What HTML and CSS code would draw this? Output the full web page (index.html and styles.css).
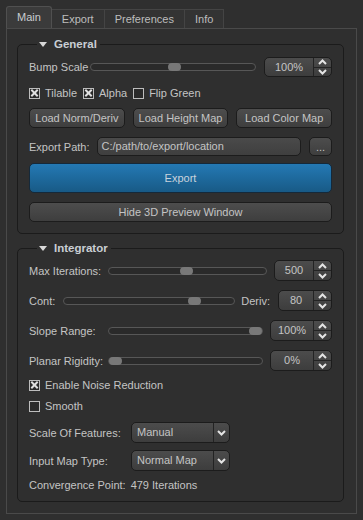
FILE: index.html
```html
<!DOCTYPE html>
<html lang="en">
<head>
    <meta charset="UTF-8">
    <title>Normal Map Tools</title>
    <link rel="stylesheet" href="styles.css">
</head>
<body>

    <!-- Tab bar -->
    <div class="tabs">
        <div class="tab active">Main</div>
        <div class="tab">Export</div>
        <div class="tab">Preferences</div>
        <div class="tab">Info</div>
    </div>

    <div class="pane">

        <!-- General -->
        <fieldset class="group general">
            <legend><span class="arrow"></span>General</legend>

            <div class="row r-bump">
                <span class="label">Bump Scale</span>
                <div class="slider"><span class="handle" style="left: 46.7%"></span></div>
                <div class="spin w68">
                    <span class="value">100%</span>
                    <span class="spin-btns">
                        <span class="up"><svg width="9" height="6" viewBox="0 0 9 6"><polyline points="1,5 4.5,1.5 8,5"/></svg></span>
                        <span class="down"><svg width="9" height="6" viewBox="0 0 9 6"><polyline points="1,1 4.5,4.5 8,1"/></svg></span>
                    </span>
                </div>
            </div>

            <div class="row r-checks">
                <label class="check on"><span class="box"></span>Tilable</label>
                <label class="check on"><span class="box"></span>Alpha</label>
                <label class="check"><span class="box"></span>Flip Green</label>
            </div>

            <div class="row r-buttons">
                <button class="btn">Load Norm/Deriv</button>
                <button class="btn">Load Height Map</button>
                <button class="btn">Load Color Map</button>
            </div>

            <div class="row r-path">
                <span class="label">Export Path:</span>
                <div class="field">C:/path/to/export/location</div>
                <button class="btn dots">...</button>
            </div>

            <button class="btn export">Export</button>
            <button class="btn hide">Hide 3D Preview Window</button>
        </fieldset>

        <!-- Integrator -->
        <fieldset class="group integrator">
            <legend><span class="arrow"></span>Integrator</legend>

            <div class="row r-slide">
                <span class="label wide">Max Iterations:</span>
                <div class="slider"><span class="handle" style="left: 45.5%"></span></div>
                <div class="spin w58">
                    <span class="value">500</span>
                    <span class="spin-btns">
                        <span class="up"><svg width="9" height="6" viewBox="0 0 9 6"><polyline points="1,5 4.5,1.5 8,5"/></svg></span>
                        <span class="down"><svg width="9" height="6" viewBox="0 0 9 6"><polyline points="1,1 4.5,4.5 8,1"/></svg></span>
                    </span>
                </div>
            </div>

            <div class="row r-slide">
                <span class="label">Cont:</span>
                <div class="slider cont"><span class="handle" style="left: 73%"></span></div>
                <span class="label deriv">Deriv:</span>
                <div class="spin w54">
                    <span class="value">80</span>
                    <span class="spin-btns">
                        <span class="up"><svg width="9" height="6" viewBox="0 0 9 6"><polyline points="1,5 4.5,1.5 8,5"/></svg></span>
                        <span class="down"><svg width="9" height="6" viewBox="0 0 9 6"><polyline points="1,1 4.5,4.5 8,1"/></svg></span>
                    </span>
                </div>
            </div>

            <div class="row r-slide">
                <span class="label wide">Slope Range:</span>
                <div class="slider"><span class="handle" style="left: 91.5%"></span></div>
                <div class="spin w62">
                    <span class="value">100%</span>
                    <span class="spin-btns">
                        <span class="up"><svg width="9" height="6" viewBox="0 0 9 6"><polyline points="1,5 4.5,1.5 8,5"/></svg></span>
                        <span class="down"><svg width="9" height="6" viewBox="0 0 9 6"><polyline points="1,1 4.5,4.5 8,1"/></svg></span>
                    </span>
                </div>
            </div>

            <div class="row r-slide">
                <span class="label wide">Planar Rigidity:</span>
                <div class="slider"><span class="handle" style="left: 0%"></span></div>
                <div class="spin w62">
                    <span class="value">0%</span>
                    <span class="spin-btns">
                        <span class="up"><svg width="9" height="6" viewBox="0 0 9 6"><polyline points="1,5 4.5,1.5 8,5"/></svg></span>
                        <span class="down"><svg width="9" height="6" viewBox="0 0 9 6"><polyline points="1,1 4.5,4.5 8,1"/></svg></span>
                    </span>
                </div>
            </div>

            <div class="row r-check">
                <label class="check on"><span class="box"></span>Enable Noise Reduction</label>
            </div>
            <div class="row r-check">
                <label class="check"><span class="box"></span>Smooth</label>
            </div>

            <div class="row r-combo first">
                <span class="label combo-label">Scale Of Features:</span>
                <div class="combo">
                    <span class="value">Manual</span>
                    <span class="combo-btn"><svg width="9" height="6" viewBox="0 0 9 6"><polyline points="1,1 4.5,4.5 8,1"/></svg></span>
                </div>
            </div>
            <div class="row r-combo">
                <span class="label combo-label">Input Map Type:</span>
                <div class="combo">
                    <span class="value">Normal Map</span>
                    <span class="combo-btn"><svg width="9" height="6" viewBox="0 0 9 6"><polyline points="1,1 4.5,4.5 8,1"/></svg></span>
                </div>
            </div>

            <div class="row r-info">
                <span class="label">Convergence Point:</span>
                <span class="label result">479 Iterations</span>
            </div>
        </fieldset>

    </div>

</body>
</html>
```

FILE: styles.css
```css
/* General */
body { margin: 0; background-color: #2f2f2f; color: #c4c4c4; font-family: "Liberation Sans", Arial, sans-serif; font-size: 11px; line-height: 14px; width: 363px; height: 520px; overflow: hidden; }
button { font-family: inherit; font-size: 11px; }

/* Tabs */
.tabs { display: flex; align-items: flex-end; height: 28px; padding-left: 6px; box-sizing: border-box; }
.tab { height: 19px; line-height: 18px; padding: 0 10px; border: 1px solid #444; border-bottom: none; border-left: none; background-color: #333; color: #bdbdbd; box-sizing: border-box; }
.tab.active { height: 22px; line-height: 21px; border: 1px solid #505050; border-bottom: none; border-radius: 3px 3px 0 0; background-color: #3b3b3b; color: #c8ccd0; }

/* Pane */
.pane { margin: 0 6px; height: 486px; border: 1px solid #4a4a4a; box-sizing: border-box; padding: 8px 12px 0 10px; }

/* Group boxes */
.group { margin: 0; border: 1px solid #1b1b1b; border-radius: 5px; padding: 6px 11px 11px 11px; min-width: 0; }
.group legend { padding: 0 3px 0 2px; margin-left: 8px; font-weight: bold; color: #c9ced4; line-height: 14px; font-size: 11.5px; }
.arrow { display: inline-block; width: 0; height: 0; border-left: 4px solid transparent; border-right: 4px solid transparent; border-top: 5px solid #d8d8d8; margin: 0 7px 1px 0; }
.integrator { margin-top: 7px; padding-top: 5px; padding-bottom: 9px; }

/* Rows */
.row { display: flex; align-items: center; }
.label { white-space: nowrap; }
.label.wide { width: 79px; flex: none; }
.r-bump { height: 20px; }
.r-checks { height: 14px; margin-top: 9px; gap: 5px; }
.r-buttons { height: 20px; margin-top: 8px; gap: 8px; }
.r-path { height: 19px; margin-top: 9px; }
.r-slide { height: 21px; margin-top: 9px; }
.r-slide:first-of-type { margin-top: 0; }
.r-check { height: 14px; margin-top: 7px; }
.r-combo { height: 21px; margin-top: 7px; }
.r-combo.first { margin-top: 9px; }
.r-info { height: 14px; margin-top: 7px; }
.result { margin-left: 5px; }

/* Slider */
.slider { position: relative; flex: 1; height: 8px; margin: 0 8px 0 2px; border: 1px solid #575757; border-radius: 4px; background-color: #2a2a2a; box-sizing: border-box; }
.r-slide .slider { margin: 0 7px 0 0; }
.slider.cont { margin: 0 6px 0 8px; }
.handle { position: absolute; top: -1px; width: 13px; height: 8px; border-radius: 4px; background-color: #787878; }
.deriv { margin-right: 8px; }

/* Spin box */
.spin { display: flex; height: 100%; border: 1px solid #1c1c1c; border-radius: 5px; background: linear-gradient(#4c4c4c, #3d3d3d); box-sizing: border-box; flex: none; }
.w68 { width: 68px; }
.w62 { width: 62px; }
.w58 { width: 58px; }
.w54 { width: 54px; }
.spin .value { flex: 1; text-align: center; line-height: 19px; color: #c4c4c4; }
.spin-btns { display: flex; flex-direction: column; width: 17px; border-left: 1px solid #232323; }
.spin-btns span { flex: 1; display: flex; align-items: center; justify-content: center; }
.spin-btns .up { border-bottom: 1px solid #232323; }
svg polyline { fill: none; stroke: #e4e4e4; stroke-width: 2; }

/* Checkbox */
.check { display: flex; align-items: center; gap: 5px; margin-right: 1px; }
.box { width: 11px; height: 11px; border: 1px solid #bdbdbd; box-sizing: border-box; position: relative; background-color: #2a2a2a; }
.check.on .box::before, .check.on .box::after { content: ""; position: absolute; left: 0px; top: 3.5px; width: 9px; height: 2px; background-color: #e0e0e0; }
.check.on .box::before { transform: rotate(45deg); }
.check.on .box::after { transform: rotate(-45deg); }

/* Buttons */
.btn { height: 100%; padding: 0; border: 1px solid #1c1c1c; border-radius: 5px; background: linear-gradient(#4d4d4d, #3e3e3e); color: #c4c4c4; box-sizing: border-box; }
.r-buttons .btn { flex: 1; }
.btn.dots { width: 23px; margin-left: 8px; flex: none; }
.btn.export { display: block; width: 100%; height: 30px; margin-top: 7px; background: linear-gradient(#2479b4, #185a86); border-color: #15293a; color: #c9d3dc; }
.btn.hide { display: block; width: 100%; height: 20px; margin-top: 9px; }

/* Text field */
.field { flex: 1; height: 100%; margin-left: 7px; padding-left: 4px; line-height: 17px; border: 1px solid #1c1c1c; border-radius: 5px; background: linear-gradient(#4a4a4a, #3f3f3f); box-sizing: border-box; color: #c4c4c4; white-space: nowrap; overflow: hidden; }

/* Combo box */
.combo-label { width: 102px; flex: none; }
.combo { display: flex; width: 99px; height: 100%; border: 1px solid #1c1c1c; border-radius: 5px; background: linear-gradient(#4c4c4c, #3d3d3d); box-sizing: border-box; }
.combo .value { flex: 1; padding-left: 5px; line-height: 19px; }
.combo-btn { width: 15px; display: flex; align-items: center; justify-content: center; border-left: 1px solid #232323; }
```
